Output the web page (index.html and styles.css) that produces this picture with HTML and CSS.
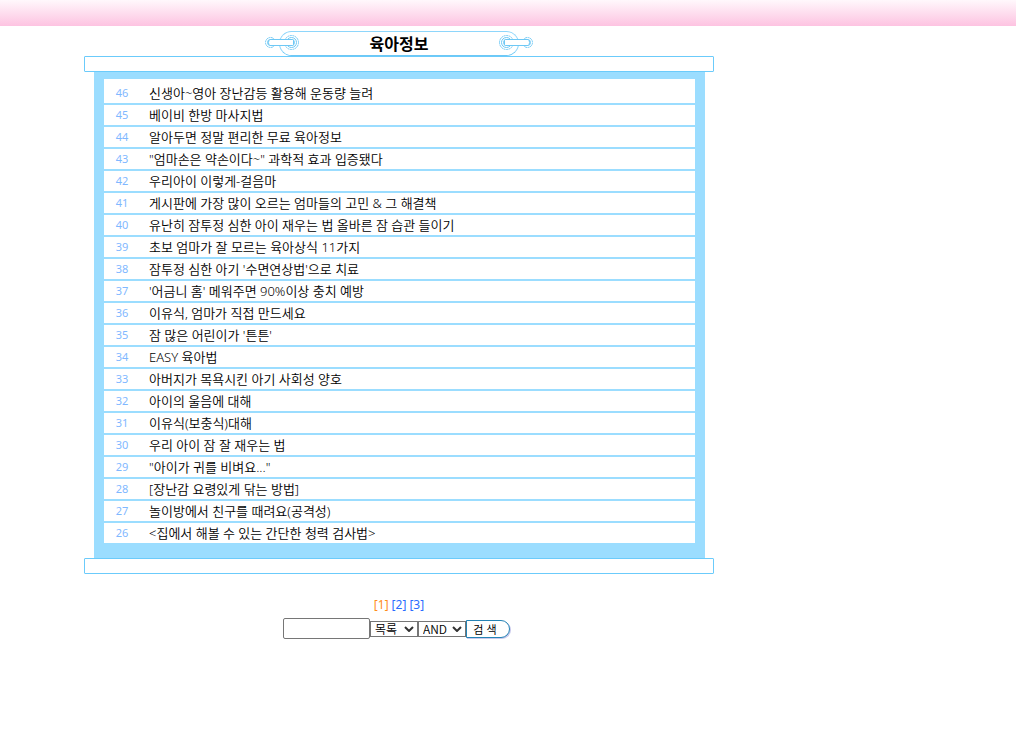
FILE: index.html
```html
<!DOCTYPE html>
<html lang="ko">
<head>
<meta charset="utf-8">
<title>육아정보</title>
<link rel="stylesheet" href="styles.css">
</head>
<body>
<div class="top-band"></div>
<main class="page">
  <header class="plaque">
    <svg class="clasp clasp-left" viewBox="0 0 34 17" width="34" height="17" aria-hidden="true">
      <g fill="none" stroke="#6ec8f5">
        <circle cx="5.5" cy="8.5" r="5" stroke-dasharray="2 .6"/><circle cx="5.5" cy="8.5" r="3"/>
        <circle cx="26.5" cy="8.5" r="7" stroke-dasharray="2 .6"/><circle cx="26.5" cy="8.5" r="5"/><circle cx="26.5" cy="8.5" r="3"/>
        <path d="M4 5.500H28V11.500H4" fill="#fff" stroke="none"/>
        <path d="M5 5.500H27.500Q28.500 5.500 28.500 6.500V10.500Q28.500 11.500 27.500 11.500H5Q3.500 11.500 3.500 8.500Q3.500 5.500 5 5.500Z"/>
      </g>
    </svg>
    <h1 class="title">육아정보</h1>
    <svg class="clasp clasp-right" viewBox="0 0 34 17" width="34" height="17" aria-hidden="true">
      <g fill="none" stroke="#6ec8f5" transform="matrix(-1 0 0 1 34 0)">
        <circle cx="5.5" cy="8.5" r="5" stroke-dasharray="2 .6"/><circle cx="5.5" cy="8.5" r="3"/>
        <circle cx="26.5" cy="8.5" r="7" stroke-dasharray="2 .6"/><circle cx="26.5" cy="8.5" r="5"/><circle cx="26.5" cy="8.5" r="3"/>
        <path d="M4 5.500H28V11.500H4" fill="#fff" stroke="none"/>
        <path d="M5 5.500H27.500Q28.500 5.500 28.500 6.500V10.500Q28.500 11.500 27.500 11.500H5Q3.500 11.500 3.500 8.500Q3.500 5.500 5 5.500Z"/>
      </g>
    </svg>
  </header>
  <section class="board">
    <div class="rod"></div>
    <div class="sheet">
      <table class="posts">
        <tbody>
          <tr><td class="num">46</td><td class="subject">신생아~영아 장난감등 활용해 운동량 늘려</td></tr>
          <tr><td class="num">45</td><td class="subject">베이비 한방 마사지법</td></tr>
          <tr><td class="num">44</td><td class="subject">알아두면 정말 편리한 무료 육아정보</td></tr>
          <tr><td class="num">43</td><td class="subject">"엄마손은 약손이다~" 과학적 효과 입증됐다</td></tr>
          <tr><td class="num">42</td><td class="subject">우리아이 이렇게-걸음마</td></tr>
          <tr><td class="num">41</td><td class="subject">게시판에 가장 많이 오르는 엄마들의 고민 &amp; 그 해결책</td></tr>
          <tr><td class="num">40</td><td class="subject">유난히 잠투정 심한 아이 재우는 법 올바른 잠 습관 들이기</td></tr>
          <tr><td class="num">39</td><td class="subject">초보 엄마가 잘 모르는 육아상식 11가지</td></tr>
          <tr><td class="num">38</td><td class="subject">잠투정 심한 아기 '수면연상법'으로 치료</td></tr>
          <tr><td class="num">37</td><td class="subject">'어금니 홈' 메워주면 90%이상 충치 예방</td></tr>
          <tr><td class="num">36</td><td class="subject">이유식, 엄마가 직접 만드세요</td></tr>
          <tr><td class="num">35</td><td class="subject">잠 많은 어린이가 '튼튼'</td></tr>
          <tr><td class="num">34</td><td class="subject">EASY 육아법</td></tr>
          <tr><td class="num">33</td><td class="subject">아버지가 목욕시킨 아기 사회성 양호</td></tr>
          <tr><td class="num">32</td><td class="subject">아이의 울음에 대해</td></tr>
          <tr><td class="num">31</td><td class="subject">이유식(보충식)대해</td></tr>
          <tr><td class="num">30</td><td class="subject">우리 아이 잠 잘 재우는 법</td></tr>
          <tr><td class="num">29</td><td class="subject">"아이가 귀를 비벼요..."</td></tr>
          <tr><td class="num">28</td><td class="subject">[장난감 요령있게 닦는 방법]</td></tr>
          <tr><td class="num">27</td><td class="subject">놀이방에서 친구를 때려요(공격성)</td></tr>
          <tr><td class="num">26</td><td class="subject">&lt;집에서 해볼 수 있는 간단한 청력 검사법&gt;</td></tr>
        </tbody>
      </table>
    </div>
    <div class="rod"></div>
  </section>
  <nav class="pager" aria-label="페이지">
    <a class="current" href="#p1" aria-current="page">[1]</a>
    <a href="#p2">[2]</a>
    <a href="#p3">[3]</a>
  </nav>
  <form class="search">
    <input class="keyword" type="text" aria-label="검색어">
    <span class="pick"><select aria-label="검색 대상"><option>목록</option></select><svg class="arrow" viewBox="0 0 10 6" width="10" height="6" aria-hidden="true"><path d="M1 1l4 4 4-4" fill="none" stroke="#333" stroke-width="2"/></svg></span>
    <span class="pick"><select aria-label="검색 조건"><option>AND</option></select><svg class="arrow" viewBox="0 0 10 6" width="10" height="6" aria-hidden="true"><path d="M1 1l4 4 4-4" fill="none" stroke="#333" stroke-width="2"/></svg></span>
    <button class="go" type="submit">검 색</button>
  </form>
</main>
</body>
</html>
```
FILE: styles.css
```css
* { box-sizing: border-box; }
body {
  margin: 0;
  background: #fff;
  color: #000;
  font: 12px/18px "Noto Sans", "Noto Sans CJK KR", sans-serif;
}
.top-band {
  height: 26px;
  background: linear-gradient(#fff8fc, #fdc3e1);
}
.page {
  max-width: 798px;
  padding: 5px 84px 0;
}
.plaque {
  position: relative;
  width: 240px;
  height: 25px;
  margin: 0 auto;
  border: 1px solid #8ed6fb;
  border-bottom-color: #6ec8f5;
  border-radius: 13px;
}
.title {
  margin: 0;
  font: bold 16px/22px "Noto Sans CJK KR", sans-serif;
  text-align: center;
}
.clasp { position: absolute; top: 2px; }
.clasp-left { left: -15px; }
.clasp-right { right: -15px; }
.rod {
  height: 16px;
  border: 1px solid #6bcbfb;
  border-radius: 1px;
  background: #fff;
}
.sheet {
  margin: 0 9px 0 10px;
  padding: 7px 10px 15px;
  background: #9bddff;
}
.posts {
  width: 100%;
  border-collapse: separate;
  border-spacing: 0;
}
.posts td {
  height: 22px;
  padding: 0;
  border-bottom: 2px solid #9bddff;
  background: #fff;
  line-height: 18px;
}
.posts tr:first-child td {
  height: 26px;
  padding-top: 4px;
}
.posts tr:last-child td {
  height: 20px;
  border-bottom: 0;
}
.posts .num {
  width: 36px;
  color: #7fb8ff;
  font-size: 11px;
  text-align: center;
}
.posts .subject {
  padding-left: 9px;
  font-size: 13px;
  font-weight: 350;
}
.pager {
  display: flex;
  justify-content: center;
  gap: 3px;
  margin-top: 22px;
}
.pager a {
  color: #2a6cff;
  text-decoration: none;
}
.pager .current { color: #ff8c1a; }
.search {
  display: flex;
  justify-content: center;
  align-items: center;
  margin: 4px 5px 0 0;
}
.keyword {
  width: 87px;
  height: 21px;
  padding: 1px 2px;
  border: 1px solid #767676;
  border-radius: 2px;
  font: inherit;
}
.pick { position: relative; display: flex; }
.pick select {
  width: 48px;
  height: 16px;
  padding: 0 4px;
  border: 1px solid #767676;
  border-radius: 0;
  appearance: none;
  background: #fff;
  color: #000;
  font: 350 12px/14px "Noto Sans CJK KR", sans-serif;
}
.arrow {
  position: absolute;
  top: 5px;
  right: 4px;
  pointer-events: none;
}
.go {
  width: 44px;
  height: 18px;
  padding: 0 6px 0 0;
  border: 1px solid #2583b5;
  border-radius: 0 9px 9px 0;
  background: #fff;
  box-shadow: 1px 1px 0 #c9c9ec;
  color: #000;
  font: 11px/16px "Noto Sans CJK KR", sans-serif;
}
```
